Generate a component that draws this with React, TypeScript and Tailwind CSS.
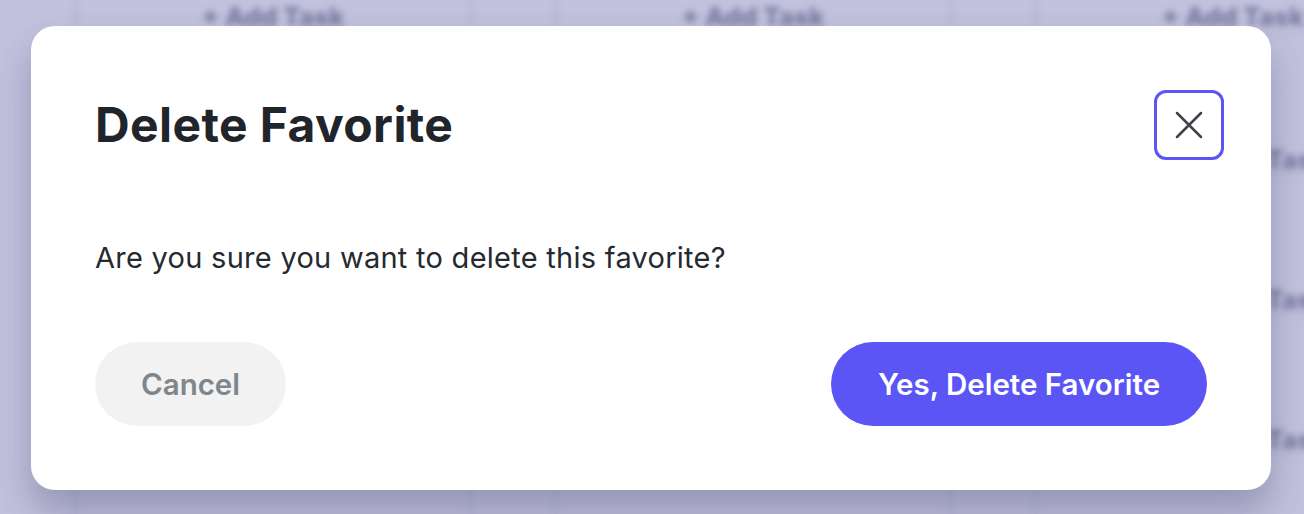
import React from "react";

const font = { fontFamily: "Inter, 'Open Sans', sans-serif" };

function Column() {
  return (
    <div className="flex w-[400px] shrink-0 flex-col border-x-[5px] border-[#b9b9d7]">
      <div className="flex h-[32px] items-center justify-center text-[26px] font-extrabold text-[#7b7ba2]">
        + Add Task
      </div>
      {[0, 1, 2, 3].map((i) => (
        <div key={i} className="h-[140px] shrink-0 border-t-[3px] border-[#b9b9d7] pl-[228px] pt-[110px] text-[26px] font-extrabold leading-[29px] text-[#7b7ba2]">
          {i < 3 ? "Task" : ""}
        </div>
      ))}
    </div>
  );
}

export default function App() {
  return (
    <div className="relative h-[514px] w-[1304px] overflow-hidden bg-[#c2c2de]" style={font}>
      <div className="flex gap-[80px] pl-[73px] blur-[3px]">
        <Column />
        <Column />
        <Column />
      </div>
      <div className="absolute inset-0 pl-[31px] pt-[26px]">
        <div className="flex h-[464px] w-[1240px] flex-col rounded-[24px] bg-white px-[64px] pb-[64px] pt-[64px] shadow-[0_22px_36px_rgba(50,50,90,0.3)]">
          <div className="flex h-[70px] items-center justify-between">
            <h1 className="text-[48px] font-bold leading-none tracking-[0.4px] text-[#1f252b]">Delete Favorite</h1>
            <button className="-mr-[17px] flex h-[70px] w-[70px] items-center justify-center rounded-[12px] border-[3px] border-[#5b55f6] bg-white text-[#3d4349]">
              <svg width="36" height="36" viewBox="0 0 24 24" fill="none" stroke="currentColor" strokeWidth="1.7" strokeLinecap="round">
                <path d="M4 4L20 20M20 4L4 20" />
              </svg>
            </button>
          </div>
          <p className="mt-[80px] text-[29px] leading-[36px] tracking-[0.27px] text-[#252a30]">Are you sure you want to delete this favorite?</p>
          <div className="mt-auto flex items-center justify-between">
            <button className="h-[84px] w-[191px] rounded-full bg-[#f2f2f2] text-[29.5px] font-semibold text-[#7f868c]">Cancel</button>
            <button className="h-[84px] w-[376px] rounded-full bg-[#5b55f6] text-[29.5px] font-semibold text-white">Yes, Delete Favorite</button>
          </div>
        </div>
      </div>
    </div>
  );
}
